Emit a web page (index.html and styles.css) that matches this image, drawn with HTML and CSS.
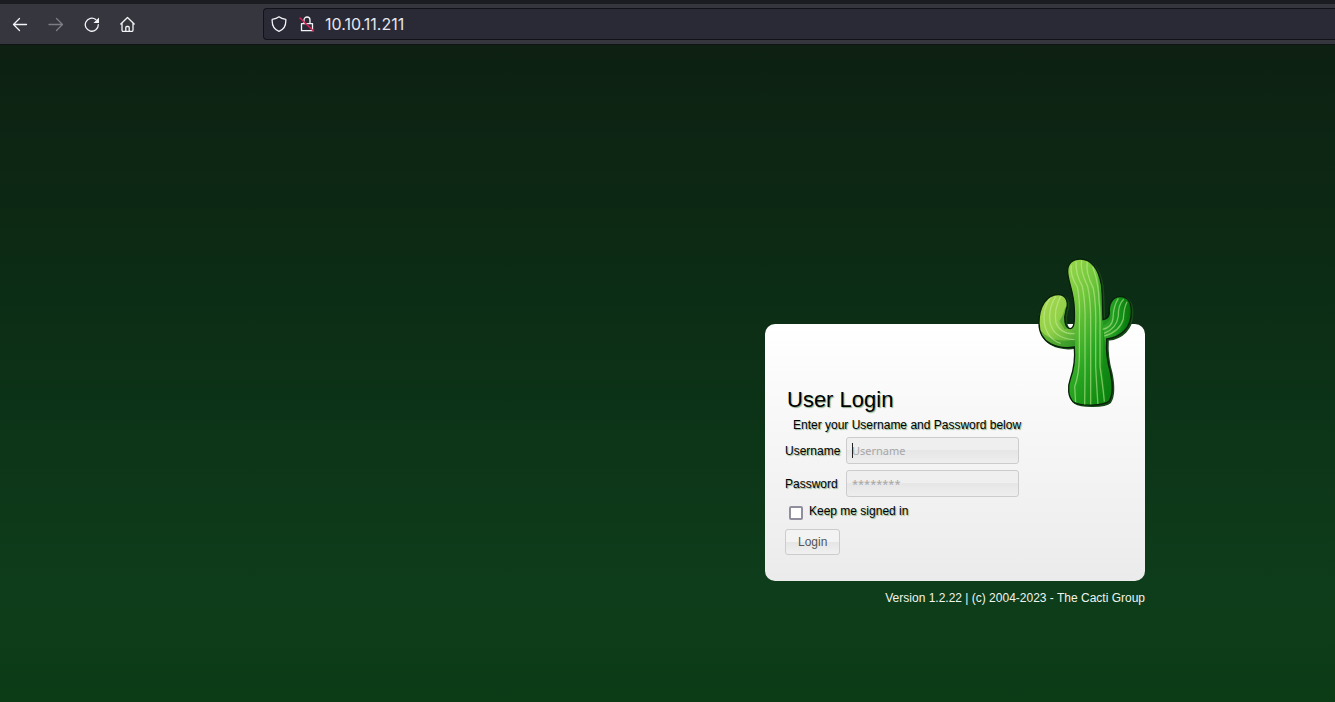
FILE: index.html
```html
<!DOCTYPE html>
<html lang="en">
<head>
<meta charset="utf-8">
<title>Login to Cacti</title>
<link rel="stylesheet" href="styles.css">
</head>
<body>
<header class="browser">
  <nav class="nav-buttons" aria-label="Browser navigation">
    <button type="button" aria-label="Back"><svg viewBox="0 0 16 16"><path d="M14.500 8.500H1.500M7.500 2.500l-6 6 6 6"/></svg></button>
    <button type="button" aria-label="Forward" disabled><svg viewBox="0 0 16 16"><path d="M1 8.500h13.500M8.500 2.500l6 6-6 6"/></svg></button>
    <button type="button" aria-label="Reload"><svg viewBox="0 0 16 16"><path d="M14.300 8.700A6.500 6.500 0 1 1 11.800 3.600"/><path class="solid" d="M15 1.500v5.500H9.500z"/></svg></button>
    <button type="button" aria-label="Home"><svg viewBox="0 0 16 16"><path d="M.8 8L7.500 1.500L14.200 8M2 7v7q0 1.500 1.500 1.500h8q1.500 0 1.500-1.500V7M5.800 15.500v-4q0-1 1-1h1.400q1 0 1 1v4"/></svg></button>
  </nav>
  <div class="address">
    <svg viewBox="0 0 16 16"><path d="M8 .8C10 2.400 12.500 3 14.800 3.300C15.200 9 13 13.500 8 15.300C3 13.500.8 9 1.200 3.300C3.500 3 6 2.400 8 .8z"/></svg>
    <svg viewBox="0 0 16 16"><path d="M2.500 7.700h11v7h-11zM5 7.500V4a3 3 0 0 1 6 0v3.500"/><path class="slash" d="M1 2l13.500 13"/></svg>
    <input class="url" type="text" value="10.10.11.211" aria-label="Address">
  </div>
</header>
<main class="page">
  <div class="login">
    <section class="card">
      <svg class="cactus" viewBox="0 0 360 510" role="img" aria-label="Cactus">
        <defs>
          <linearGradient id="skin" x1="0.100" y1="0.100" x2="0.900" y2="0.850">
            <stop offset="0" stop-color="#a6dc4f"/>
            <stop offset="0.350" stop-color="#70c63b"/>
            <stop offset="0.650" stop-color="#29a622"/>
            <stop offset="1" stop-color="#078009"/>
          </linearGradient>
          <linearGradient id="arm-left" x1="0" y1="0" x2="0.900" y2="1">
            <stop offset="0" stop-color="#acd94d"/>
            <stop offset="0.550" stop-color="#91d149"/>
            <stop offset="1" stop-color="#4aa931"/>
          </linearGradient>
          <linearGradient id="arm-right" x1="0" y1="0.500" x2="1" y2="0.500">
            <stop offset="0" stop-color="#35a82b"/>
            <stop offset="0.500" stop-color="#16961a"/>
            <stop offset="1" stop-color="#046806"/>
          </linearGradient>
          <path id="body" d="M151 27C183 27 206 55 214 104C219 145 217 171 219 209C230 207 237 202 238 190C236 165 245 140 271 140C293 140 304 158 304 185C304 234 273 262 230 267C228 302 231 333 241 366C248 401 250 434 237 454C221 468 153 470 130 456C114 441 112 411 121 387C132 357 136 326 133 291C86 298 27 283 27 219C27 168 51 134 84 134C112 134 116 162 108 181C101 204 103 235 121 236C134 234 134 211 133 178C132 125 114 96 113 66C112 41 128 27 151 27z"/>
          <clipPath id="clip"><use href="#body"/></clipPath>
        </defs>
        <use href="#body" class="cactus-shadow"/>
        <use href="#body" fill="url(#skin)"/>
        <g clip-path="url(#clip)">
          <path fill="url(#arm-left)" d="M20 125h95v110l22 5v55H20z"/>
          <path fill="url(#arm-right)" d="M219 135h95v135h-92z"/>
          <path class="shade" d="M28 238Q54 268 84 270Q110 275 135 268v30H55Q26 279 28 238zM88 214Q100 196 106 170L117 185v50L104 238zM202 59Q218 125 218 211Q237 211 244 180L240 208Q224 229 218 228Q222 300 217 354Q222 410 231 464H252V360Q228 300 231 267Q278 257 290 205L310 197V250L226 289L219 230z"/>
          <path class="ribs" d="M124 46Q119 74 142 111Q151 151 148 220V320Q147 375 134 410L137 460M138 34Q136 72 157 109Q167 160 165 225V365L164 465M155 30Q149 60 173 109Q183 152 182 230V465M172 36Q165 65 190 115Q199 163 197 240V350Q201 425 204 465M188 50Q207 101 207 155Q211 180 210 240V350Q219 410 223 455M62 141Q37 176 43 219Q52 268 92 280M78 137Q54 175 60 216Q69 266 134 269M93 137Q70 180 78 218Q91 253 134 251M265 145Q250 168 249 205Q246 232 218 238M281 148Q264 165 265 198Q260 236 222 250M291 155Q281 176 280 207Q269 245 223 258"/>
        </g>
        <use href="#body" class="cactus-outline"/>
      </svg>
      <form class="form">
        <h1>User Login</h1>
        <p class="intro">Enter your Username and Password below</p>
        <div class="field">
          <label for="username">Username</label>
          <div class="input-wrap"><input id="username" type="text" placeholder="Username"><span class="caret"></span></div>
        </div>
        <div class="field">
          <label for="password">Password</label>
          <div class="input-wrap"><input id="password" type="password" placeholder="********"></div>
        </div>
        <div class="keep">
          <input id="keep" type="checkbox">
          <label for="keep">Keep me signed in</label>
        </div>
        <button class="submit" type="submit">Login</button>
      </form>
    </section>
    <footer class="version">Version 1.2.22 | (c) 2004-2023 - The Cacti Group</footer>
  </div>
</main>
</body>
</html>
```

FILE: styles.css
```css
* { box-sizing: border-box; }

body {
  margin: 0;
  min-height: 100vh;
  display: flex;
  flex-direction: column;
  font: 12px/16px "Liberation Sans", Arial, sans-serif;
}

.browser {
  display: flex;
  align-items: center;
  height: 45px;
  border-top: 4px solid #1a1c22;
  border-bottom: 1px solid #101216;
  background: #35363e;
  color: #f3f4f8;
}

.browser svg {
  display: block;
  width: 16px;
  height: 16px;
  flex: none;
  fill: none;
  stroke: currentColor;
  stroke-width: 1.3;
  stroke-linecap: round;
  stroke-linejoin: round;
}

.browser .solid { fill: currentColor; stroke: none; }
.browser .slash { stroke: #d92255; stroke-width: 1.5; }

.nav-buttons {
  display: flex;
  gap: 20px;
  width: 263px;
  flex: none;
  padding-left: 12px;
}

.nav-buttons button {
  padding: 0;
  border: 0;
  background: none;
  color: inherit;
}

.nav-buttons button:disabled { color: #7c7d85; }

.address {
  display: flex;
  flex: 1;
  align-items: center;
  gap: 12px;
  height: 32px;
  padding-left: 7px;
  border: 1px solid #11121a;
  border-right: 0;
  border-radius: 4px 0 0 4px;
  background: #292a35;
}

.url {
  flex: 1;
  min-width: 0;
  margin-left: -2px;
  padding: 0;
  border: 0;
  outline: 0;
  background: none;
  color: #e6e6ee;
  font: 16px/20px Inter, "Noto Sans", sans-serif;
}

.page {
  display: flex;
  flex: 1;
  justify-content: flex-end;
  align-items: flex-start;
  padding: 279px 190px 0 0;
  background: linear-gradient(#0d2012, #0c3116 50%, #0e3d1b 82%, #0c3c16);
}

.login { width: 380px; }

.card {
  position: relative;
  padding: 62px 20px 26px;
  border-radius: 10px;
  background: linear-gradient(#fff, #ebebeb);
}

.cactus {
  position: absolute;
  top: -74px;
  right: -5px;
  width: 120px;
  height: 170px;
}

.cactus-shadow { fill: #174919; stroke: #174919; stroke-width: 5; transform: translate(4px, 3px); }
.cactus-outline { fill: none; stroke: #08200a; stroke-width: 4; }
.shade { fill: #087814; opacity: 0.35; }
.ribs { fill: none; stroke: #c8ee9c; stroke-width: 4; opacity: 0.55; }

.form {
  color: #000;
  text-shadow: 1px 1px 1px #8ab08a;
}

h1 {
  margin: 0 2px 4px;
  font-size: 22px;
  line-height: 27px;
  font-weight: 400;
}

.intro { margin: 0 8px 4px; }

.field {
  display: flex;
  align-items: center;
  margin-bottom: 6px;
}

.field label { width: 61px; }

.input-wrap { position: relative; }

.input-wrap input {
  display: block;
  width: 173px;
  height: 27px;
  padding: 2px 5px;
  border: 1px solid #ccc;
  border-radius: 3px;
  outline: 0;
  background: linear-gradient(#efefef 50%, #e6e6e6 50%, #eee);
  font: 11px/16px "Noto Sans", sans-serif;
}

.input-wrap input::placeholder { color: #a6a6a6; opacity: 1; text-shadow: none; }

.caret {
  position: absolute;
  left: 6px;
  top: 6px;
  width: 1px;
  height: 15px;
  background: #222;
}

.keep {
  display: flex;
  gap: 6px;
  margin-bottom: 9px;
  padding-left: 4px;
}

.keep input {
  appearance: none;
  width: 14px;
  height: 14px;
  margin: 3px 0 0;
  border: 2px solid #8f8f9d;
  border-radius: 2px;
  background: #fff;
}

.submit {
  display: block;
  height: 26px;
  padding: 0 12px;
  border: 1px solid #ccc;
  border-radius: 3px;
  background: linear-gradient(#f3f3f3 50%, #e6e6e6 50%, #f0f0f0);
  color: #555;
  font: 12px/16px "Liberation Sans", Arial, sans-serif;
}

.version {
  margin-top: 9px;
  color: #f0f5ee;
  text-align: right;
}
```
